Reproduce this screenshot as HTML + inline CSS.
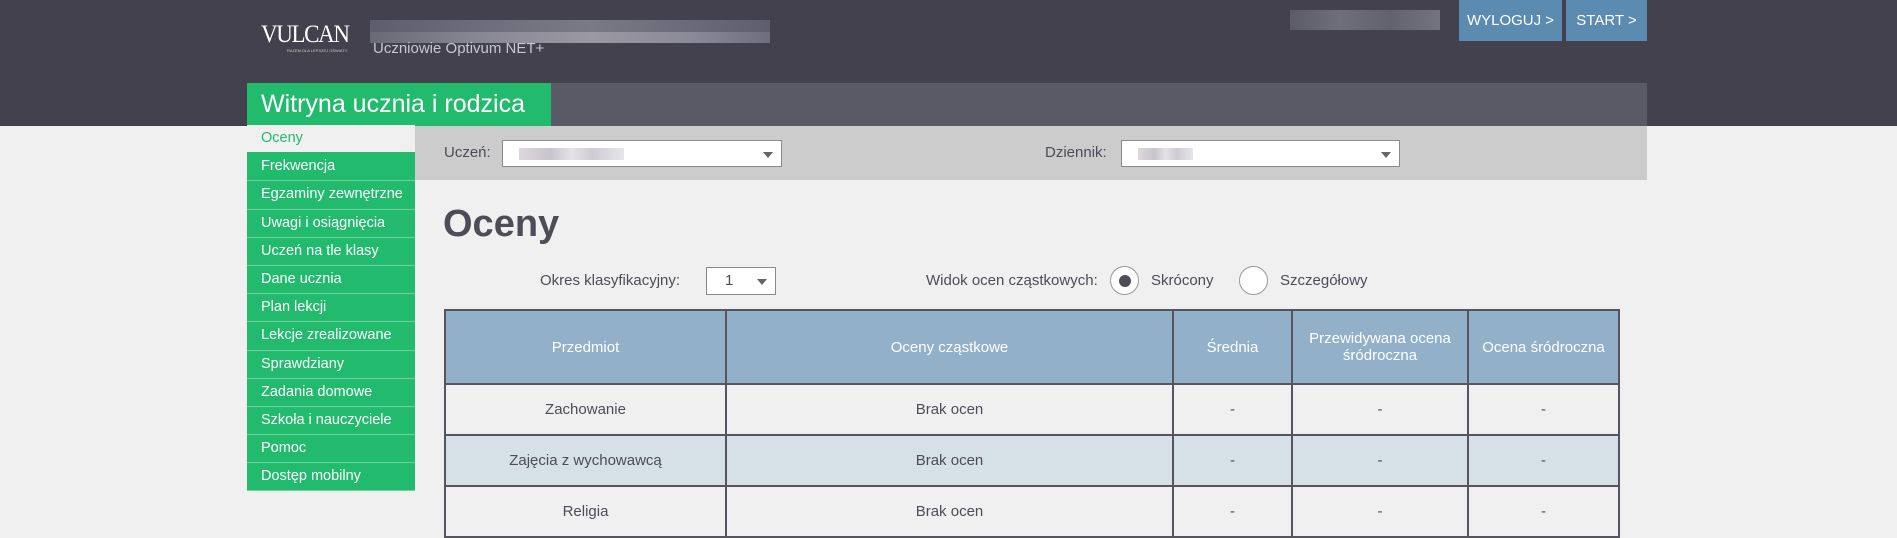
<!DOCTYPE html>
<html><head><meta charset="utf-8"><style>
*{margin:0;padding:0;box-sizing:border-box}
body{width:1897px;height:537px;overflow:hidden;background:#f0f0f0;font-family:"Liberation Sans",sans-serif;position:relative;color:#4d4c57}
.a{position:absolute}
#hdr{left:0;top:0;width:1897px;height:126px;background:#42414d}
.btn{top:0;height:41px;background:#5b8bb0;color:#fff;font-size:15px;line-height:41px;text-align:center}
.menu{left:247px;top:125px;width:168px}
.menu div{height:28.2px;line-height:27px;padding-left:14px;font-size:14.5px;color:#fff;background:#22bb6e;border-bottom:1px solid #6fd39f}
.menu div.cur{background:#f0f0f0;color:#22bb6e;border-bottom:1px solid #22bb6e}
.sel{background:#fff;border:1px solid #8a8a8a;height:27px}
.sel:after{content:"";position:absolute;right:8px;top:11px;border-left:5px solid transparent;border-right:5px solid transparent;border-top:6px solid #666}
.blur{background:linear-gradient(90deg,#dcd8dc,#c8c4cc 30%,#e4e2e6 50%,#cfcbd3 70%,#e6e6ea);}
table{position:absolute;left:444px;top:309px;border-collapse:collapse;font-size:15px;text-align:center}
td,th{border:2px solid #55545f;font-weight:normal}
th{background:#92b1c9;color:#fff;height:74px}
td{height:51px;color:#4d4c57}
tr.alt td{background:#d5e0e7}
.radio{width:29px;height:29px;border-radius:50%;background:#fff;border:1px solid #999}
</style></head><body>
<div id="hdr" class="a"></div>
<div class="a" style="left:261px;top:21px;color:#fff;font-family:'Liberation Serif',serif;font-size:25px;letter-spacing:-1.5px;transform:scaleX(0.92);transform-origin:left">VULCAN</div>
<div class="a" style="left:287px;top:48px;color:#ccc;font-size:4px">RAZEM DLA LEPSZEJ OŚWIATY</div>
<div class="a" style="left:370px;top:20px;width:400px;height:12px;background:linear-gradient(90deg,#5e5d6b,#6f6e7c 30%,#7a7986 55%,#6b6a78 80%,#5f5e6c)"></div>
<div class="a" style="left:370px;top:32px;width:400px;height:11px;background:linear-gradient(90deg,#6a6976,#8a8996 30%,#9a98a2 55%,#8b8a98 80%,#6f6e7c)"></div>
<div class="a" style="left:373px;top:40px;color:#c8c8d4;font-size:15px">Uczniowie Optivum NET+</div>
<div class="a" style="left:1290px;top:10px;width:150px;height:20px;background:linear-gradient(90deg,#5c5b68,#6f6e7b,#62616e,#747380);"></div>
<div class="a btn" style="left:1459px;width:103px">WYLOGUJ &gt;</div>
<div class="a btn" style="left:1566px;width:81px">START &gt;</div>
<div class="a" style="left:247px;top:83px;width:304px;height:43px;background:#22bb6e;color:#fff;font-size:25px;line-height:43px;padding-left:14px">Witryna ucznia i rodzica</div>
<div class="a" style="left:551px;top:83px;width:1096px;height:43px;background:#5a5966"></div>
<div class="a menu">
<div class="cur">Oceny</div><div>Frekwencja</div><div>Egzaminy zewnętrzne</div><div>Uwagi i osiągnięcia</div><div>Uczeń na tle klasy</div><div>Dane ucznia</div><div>Plan lekcji</div><div>Lekcje zrealizowane</div><div>Sprawdziany</div><div>Zadania domowe</div><div>Szkoła i nauczyciele</div><div>Pomoc</div><div>Dostęp mobilny</div>
</div>
<div class="a" style="left:415px;top:126px;width:1232px;height:54px;background:#cccccc"></div>
<div class="a" style="left:444px;top:144px;font-size:15px">Uczeń:</div>
<div class="a sel" style="left:502px;top:140px;width:280px"><div class="a blur" style="left:16px;top:7px;width:105px;height:12px"></div></div>
<div class="a" style="left:1045px;top:144px;font-size:15px">Dziennik:</div>
<div class="a sel" style="left:1121px;top:140px;width:279px"><div class="a blur" style="left:16px;top:7px;width:55px;height:12px"></div></div>
<div class="a" style="left:443px;top:203px;font-size:38px;font-weight:bold;color:#4d4c57">Oceny</div>
<div class="a" style="left:540px;top:272px;font-size:15px">Okres klasyfikacyjny:</div>
<div class="a sel" style="left:706px;top:267px;width:70px;height:28px;font-size:15px;line-height:26px;padding-left:18px">1</div>
<div class="a" style="left:926px;top:272px;font-size:15px">Widok ocen cząstkowych:</div>
<div class="a radio" style="left:1110px;top:266px"><div class="a" style="left:8px;top:8px;width:12px;height:12px;border-radius:50%;background:#4d4c57"></div></div>
<div class="a" style="left:1151px;top:272px;font-size:15px">Skrócony</div>
<div class="a radio" style="left:1239px;top:266px"></div>
<div class="a" style="left:1280px;top:272px;font-size:15px">Szczegółowy</div>
<table>
<tr><th style="width:281px">Przedmiot</th><th style="width:447px">Oceny cząstkowe</th><th style="width:119px">Średnia</th><th style="width:176px">Przewidywana ocena<br>śródroczna</th><th style="width:151px">Ocena śródroczna</th></tr>
<tr><td>Zachowanie</td><td>Brak ocen</td><td>-</td><td>-</td><td>-</td></tr>
<tr class="alt"><td>Zajęcia z wychowawcą</td><td>Brak ocen</td><td>-</td><td>-</td><td>-</td></tr>
<tr><td>Religia</td><td>Brak ocen</td><td>-</td><td>-</td><td>-</td></tr>
</table>
</body></html>
